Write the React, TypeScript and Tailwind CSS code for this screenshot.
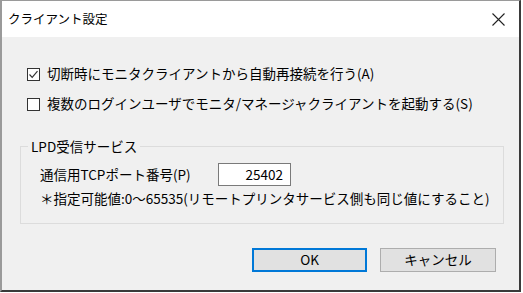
import React from "react";

const font = { fontFamily: '"Noto Sans CJK JP", "Noto Sans", sans-serif' };

function Check({ checked }: { checked: boolean }) {
  return (
    <div className="w-[13px] h-[13px] border border-[#333333] bg-white flex items-center justify-center shrink-0">
      {checked && (
        <svg width="11" height="11" viewBox="0 0 11 11">
          <path d="M1.5 5.5 L4.2 8.3 L9.5 2.2" fill="none" stroke="#333333" strokeWidth="1.2" />
        </svg>
      )}
    </div>
  );
}

export default function App() {
  return (
    <div className="w-[523px] h-[293px] bg-white" style={font}>
      <div className="w-[521px] h-[292px] border-t border-t-[#9a9a9a] border-l-2 border-l-[#9a9a9a] border-r-2 border-r-[#3a3a3a] border-b-2 border-b-[#3a3a3a] flex flex-col text-black">
        <div className="h-[36px] bg-white flex items-center justify-between pl-[6px] pr-[14px] shrink-0">
          <span className="text-[12.5px] leading-none">クライアント設定</span>
          <svg width="13" height="13" viewBox="0 0 13 13">
            <path d="M0.5 0.5 L12.5 12.5 M12.5 0.5 L0.5 12.5" stroke="#222" strokeWidth="1.1" />
          </svg>
        </div>
        <div className="flex-1 bg-[#f0f0f0] flex flex-col pt-[27px] pl-[25px] text-[13.5px]">
          <div className="h-[20px] flex items-center gap-[7px]">
            <Check checked />
            <span className="leading-none">切断時にモニタクライアントから自動再接続を行う(A)</span>
          </div>
          <div className="h-[20px] mt-[10px] flex items-center gap-[7px]">
            <Check checked={false} />
            <span className="leading-none">複数のログインユーザでモニタ/マネージャクライアントを起動する(S)</span>
          </div>
          <fieldset className="mt-[24px] ml-[-7px] w-[484px] border border-[#dcdcdc] p-0">
            <legend className="ml-[7px] px-[3px] h-[16px] leading-[16px]">LPD受信サービス</legend>
            <div className="pl-[19px] pt-[9px] pb-[16px]">
              <div className="h-[23px] flex items-center">
                <span className="w-[178px] leading-none">通信用TCPポート番号(P)</span>
                <div className="w-[73px] h-[23px] bg-white border border-[#7a7a7a] flex items-center justify-end pr-[7px]">
                  <span className="leading-none">25402</span>
                </div>
              </div>
              <div className="h-[16px] mt-[5px] flex items-center">
                <span className="leading-none whitespace-nowrap">＊指定可能値:0～65535(リモートプリンタサービス側も同じ値にすること)</span>
              </div>
            </div>
          </fieldset>
          <div className="mt-[24px] flex justify-end gap-[13px] pr-[23px]">
            <div className="w-[115px] h-[24px] bg-[#e1e1e1] border-2 border-[#0078d7] flex items-center justify-center">
              <span className="leading-none">OK</span>
            </div>
            <div className="w-[116px] h-[24px] bg-[#e1e1e1] border border-[#adadad] flex items-center justify-center">
              <span className="leading-none">キャンセル</span>
            </div>
          </div>
        </div>
      </div>
    </div>
  );
}
